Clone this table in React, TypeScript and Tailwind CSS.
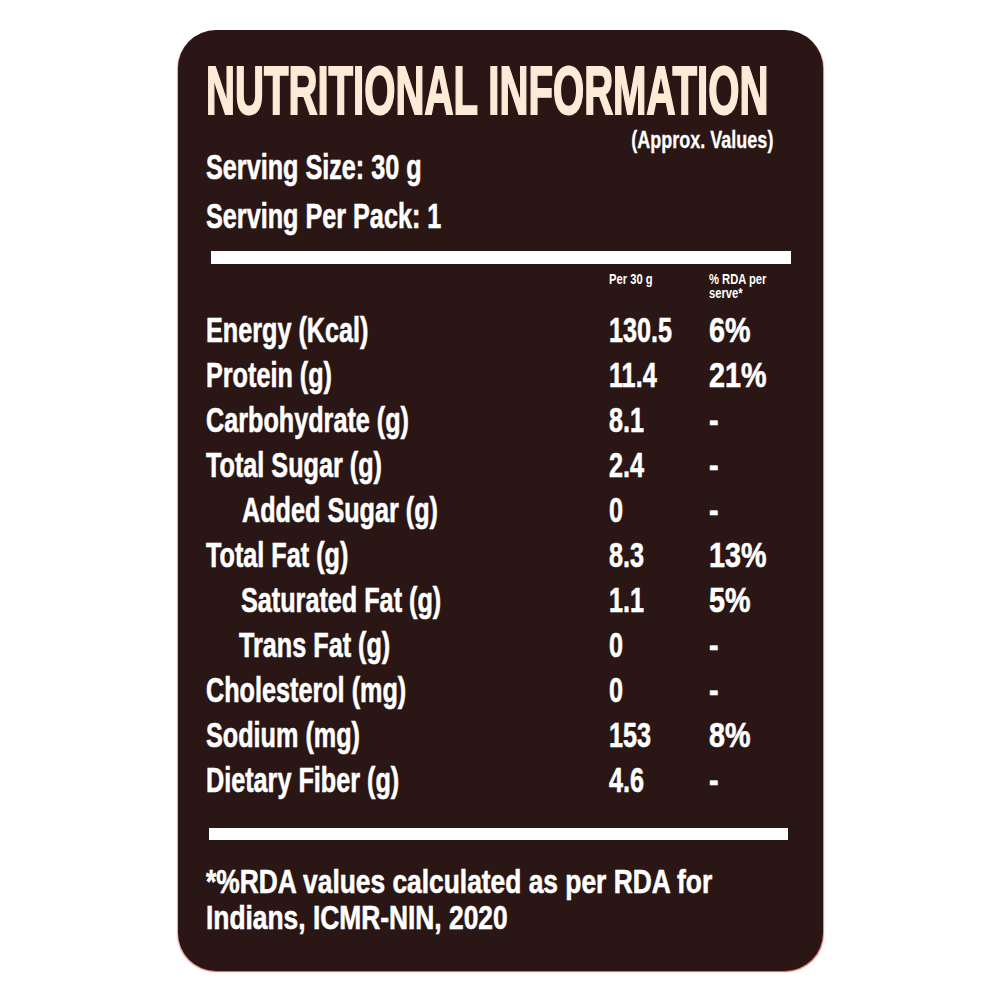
import React from "react";

type Row = { label: string; value: string; rda: string; indent?: string };

const rows: Row[] = [
  { label: "Energy (Kcal)", value: "130.5", rda: "6%" },
  { label: "Protein (g)", value: "11.4", rda: "21%" },
  { label: "Carbohydrate (g)", value: "8.1", rda: "-" },
  { label: "Total Sugar (g)", value: "2.4", rda: "-" },
  { label: "Added Sugar (g)", value: "0", rda: "-", indent: "pl-[36px]" },
  { label: "Total Fat (g)", value: "8.3", rda: "13%" },
  { label: "Saturated Fat (g)", value: "1.1", rda: "5%", indent: "pl-[35px]" },
  { label: "Trans Fat (g)", value: "0", rda: "-", indent: "pl-[33px]" },
  { label: "Cholesterol (mg)", value: "0", rda: "-" },
  { label: "Sodium (mg)", value: "153", rda: "8%" },
  { label: "Dietary Fiber (g)", value: "4.6", rda: "-" },
];

const body =
  "inline-block whitespace-nowrap origin-left scale-x-[0.72] [-webkit-text-stroke:0.6px_white]";
const rdaCls =
  "inline-block whitespace-nowrap origin-left scale-x-[0.82] [-webkit-text-stroke:0.6px_white]";

export default function App() {
  return (
    <div className="flex min-h-screen w-full items-center justify-center bg-white [font-family:'Liberation_Sans',Arial,sans-serif]">
      <div className="flex h-[941px] w-[645px] flex-col overflow-hidden rounded-[38px] bg-[#2a1715] pl-[28px] pr-[30px] pt-[26px] font-bold text-white shadow-[1px_1px_1px_rgba(210,80,60,0.7),-1px_1px_1px_rgba(210,80,60,0.5)]">
        <div className="h-[68px] whitespace-nowrap">
          <span className="inline-block origin-left scale-x-[0.59] text-[68px] leading-[68px] text-[#fdebd8] [-webkit-text-stroke:2px_#fdebd8]">
            NUTRITIONAL INFORMATION
          </span>
        </div>

        <div className="mt-[4px] flex items-start justify-between">
          <div className="flex flex-col pt-[14px] text-[35px] leading-[49px]">
            <div>
              <span className={body}>Serving Size: 30 g</span>
            </div>
            <div>
              <span className={body}>Serving Per Pack: 1</span>
            </div>
          </div>
          <span className="mr-[19px] inline-block origin-right scale-x-[0.75] whitespace-nowrap text-[24px] leading-[24px] [-webkit-text-stroke:0.3px_white]">
            (Approx. Values)
          </span>
        </div>

        <div className="ml-[5px] mt-[11px] h-[13px] w-[580px] bg-white" />

        <div className="mt-[8px] grid grid-cols-[403px_100px_1fr] text-[14px] leading-[14px]">
          <span />
          <div>
            <span className="inline-block origin-left scale-x-[0.8] whitespace-nowrap">Per 30 g</span>
          </div>
          <div className="flex flex-col">
            <span className="inline-block origin-left scale-x-[0.8] whitespace-nowrap">% RDA per</span>
            <span className="inline-block origin-left scale-x-[0.8] whitespace-nowrap">serve*</span>
          </div>
        </div>

        <div className="mt-[7px] flex flex-col text-[35px] leading-[45px]">
          {rows.map((r) => (
            <div key={r.label} className="grid grid-cols-[403px_100px_1fr]">
              <div className={r.indent ?? ""}>
                <span className={body}>{r.label}</span>
              </div>
              <div>
                <span className={body}>{r.value}</span>
              </div>
              <div>
                <span className={rdaCls}>{r.rda}</span>
              </div>
            </div>
          ))}
        </div>

        <div className="ml-[3px] mt-[26px] h-[12px] w-[579px] bg-white" />

        <div className="mt-[23px] flex flex-col text-[34px] leading-[36px]">
          <div>
            <span className="inline-block origin-left scale-x-[0.775] whitespace-nowrap [-webkit-text-stroke:0.6px_white]">
              *%RDA values calculated as per RDA for
            </span>
          </div>
          <div>
            <span className="inline-block origin-left scale-x-[0.775] whitespace-nowrap [-webkit-text-stroke:0.6px_white]">
              Indians, ICMR-NIN, 2020
            </span>
          </div>
        </div>
      </div>
    </div>
  );
}
